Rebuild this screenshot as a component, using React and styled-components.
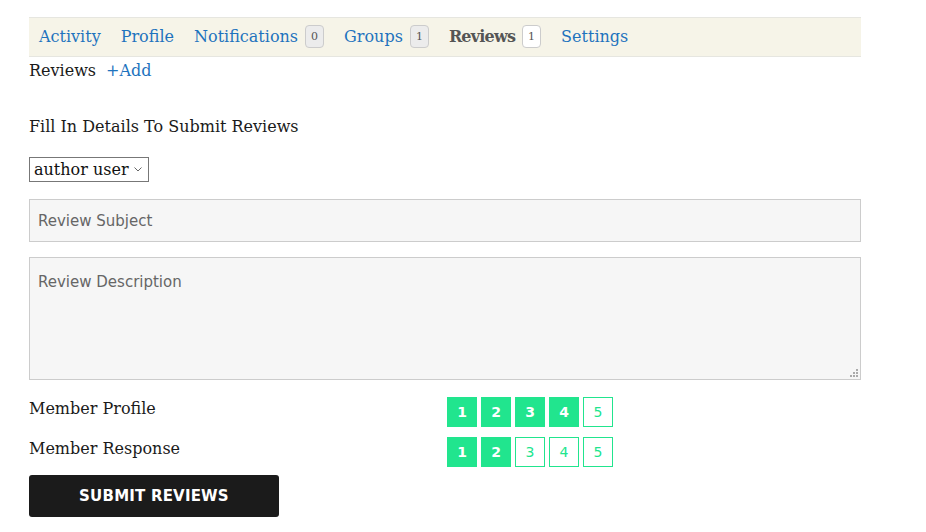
import React from 'react';
import styled, { createGlobalStyle } from 'styled-components';

const Global = createGlobalStyle`
  body {
    margin: 0;
    background: #fff;
    font-family: "DejaVu Serif", "Liberation Serif", serif;
    color: #1a1a1a;
  }
`;

const tabs = [
  { label: 'Activity' },
  { label: 'Profile' },
  { label: 'Notifications', count: 0 },
  { label: 'Groups', count: 1 },
  { label: 'Reviews', count: 1, active: true },
  { label: 'Settings' },
];

const ratings = [
  { label: 'Member Profile', value: 4 },
  { label: 'Member Response', value: 2 },
];

const App = () => {
  return (
    <Page>
      <Global />
      <Nav>
        {tabs.map((t) => (
          <Tab key={t.label} $active={t.active}>
            {t.label}
            {t.count !== undefined && <Badge $active={t.active}>{t.count}</Badge>}
          </Tab>
        ))}
      </Nav>
      <SubNav>
        <span>Reviews</span>
        <AddLink>+Add</AddLink>
      </SubNav>
      <Heading>Fill In Details To Submit Reviews</Heading>
      <Select defaultValue="author user">
        <option>author user</option>
      </Select>
      <Input placeholder="Review Subject" />
      <AreaWrap>
        <TextArea placeholder="Review Description" />
        <Grip width="10" height="10" viewBox="0 0 10 10">
          <rect x="7" y="1" width="2" height="2" fill="#aaa" />
          <rect x="4" y="4" width="2" height="2" fill="#aaa" />
          <rect x="7" y="4" width="2" height="2" fill="#aaa" />
          <rect x="1" y="7" width="2" height="2" fill="#aaa" />
          <rect x="4" y="7" width="2" height="2" fill="#aaa" />
          <rect x="7" y="7" width="2" height="2" fill="#aaa" />
        </Grip>
      </AreaWrap>
      {ratings.map((r) => (
        <RatingRow key={r.label}>
          <RatingLabel>{r.label}</RatingLabel>
          <Stars>
            {[1, 2, 3, 4, 5].map((n) => (
              <Star key={n} $on={n <= r.value}>{n}</Star>
            ))}
          </Stars>
        </RatingRow>
      ))}
      <SubmitButton>SUBMIT REVIEWS</SubmitButton>
    </Page>
  );
};

const Page = styled.div`
  width: 832px;
  margin-left: 29px;
  padding-top: 17px;
`;

const Nav = styled.div`
  display: flex;
  align-items: center;
  gap: 20px;
  padding: 0 10px 2px;
  height: 36px;
  background: #f6f4e8;
  border-top: 1px solid #e6e6e0;
  border-bottom: 1px solid #e6e6e0;
`;

const Tab = styled.a`
  display: flex;
  align-items: center;
  gap: 7px;
  font-size: 16px;
  font-weight: ${(p) => (p.$active ? 700 : 400)};
  letter-spacing: ${(p) => (p.$active ? '-0.8px' : '0')};
  color: ${(p) => (p.$active ? '#555' : '#1e73be')};
  cursor: pointer;
`;

const Badge = styled.span`
  display: inline-flex;
  align-items: center;
  justify-content: center;
  min-width: 19px;
  height: 23px;
  padding: 0 1px;
  box-sizing: border-box;
  border: 1px solid #ccc;
  border-radius: 4px;
  background: ${(p) => (p.$active ? '#fff' : '#ececec')};
  color: #555;
  font-size: 11px;
  font-weight: 400;
  letter-spacing: 0;
`;

const SubNav = styled.div`
  display: flex;
  gap: 10px;
  margin-top: 2px;
  font-size: 16px;
  line-height: 24px;
`;

const AddLink = styled.a`
  color: #1e73be;
`;

const Heading = styled.p`
  margin: 32px 0 0;
  font-size: 16px;
  line-height: 24px;
`;

const Select = styled.select`
  display: block;
  margin-top: 18px;
  width: 120px;
  height: 25px;
  padding: 0 4px;
  appearance: none;
  font-family: "DejaVu Serif", serif;
  font-size: 16px;
  color: #111;
  background: #fff url("data:image/svg+xml,%3Csvg xmlns='http://www.w3.org/2000/svg' width='8' height='5' viewBox='0 0 8 5'%3E%3Cpath d='M0.5 0.5 L4 4 L7.5 0.5' fill='none' stroke='%23666' stroke-width='1'/%3E%3C/svg%3E") no-repeat right 6px center;
  border: 1px solid #777;
  border-radius: 0;
`;

const Input = styled.input`
  display: block;
  margin-top: 17px;
  width: 100%;
  height: 43px;
  box-sizing: border-box;
  padding: 0 8px;
  background: #f6f6f6;
  border: 1px solid #ccc;
  font-family: "DejaVu Sans", "Noto Sans", sans-serif;
  font-size: 15px;
  color: #666;
  outline: none;
  &::placeholder { color: #666; }
`;

const AreaWrap = styled.div`
  position: relative;
  margin-top: 15px;
`;

const TextArea = styled.textarea`
  display: block;
  width: 100%;
  height: 123px;
  box-sizing: border-box;
  padding: 15px 8px;
  background: #f6f6f6;
  border: 1px solid #ccc;
  font-family: "DejaVu Sans", "Noto Sans", sans-serif;
  font-size: 15px;
  color: #666;
  outline: none;
  resize: none;
  &::placeholder { color: #666; }
`;

const Grip = styled.svg`
  position: absolute;
  right: 2px;
  bottom: 2px;
`;

const RatingRow = styled.div`
  display: grid;
  grid-template-columns: 418px 1fr;
  align-items: center;
  margin-top: 17px;
  & + & { margin-top: 10px; }
`;

const RatingLabel = styled.span`
  font-size: 16px;
  line-height: 22px;
  margin-top: -6px;
`;

const Stars = styled.div`
  display: flex;
  gap: 4px;
`;

const Star = styled.span`
  width: 30px;
  height: 30px;
  box-sizing: border-box;
  display: flex;
  align-items: center;
  justify-content: center;
  border: 1px solid #21e58e;
  background: ${(p) => (p.$on ? '#21e58e' : '#fff')};
  color: ${(p) => (p.$on ? '#fff' : '#21e58e')};
  font-family: "DejaVu Sans", "Noto Sans", sans-serif;
  font-size: 14px;
  font-weight: ${(p) => (p.$on ? 700 : 400)};
`;

const SubmitButton = styled.button`
  display: block;
  margin-top: 8px;
  width: 250px;
  height: 42px;
  background: #1b1b1b;
  color: #fff;
  border: none;
  border-radius: 3px;
  font-family: "DejaVu Sans", "Noto Sans", sans-serif;
  font-weight: 700;
  font-size: 15px;
  letter-spacing: 0.2px;
`;

export default App;
